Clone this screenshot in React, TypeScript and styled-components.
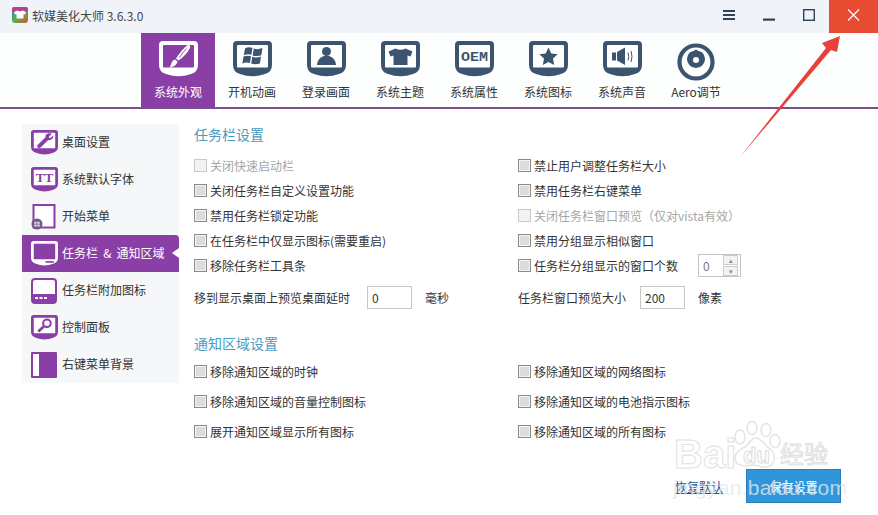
import React from "react";
import styled, { createGlobalStyle } from "styled-components";

const Navy = "#3b5470";
const Purple = "#8a3fa6";

const GlobalStyle = createGlobalStyle`
	html, body {
		margin: 0;
		padding: 0;
		background: #fff;
	}
	body {
		font-family: "Noto Sans CJK SC", "Liberation Sans", sans-serif;
		font-size: 12px;
		color: #333;
	}
`;

/* shared tablet-like frame used by the nav and the sidebar icons */
const Screen = ({ size, color, inner, children }: { size: number; color: string; inner: string; children?: React.ReactNode }) => (
	<svg width={size} height={size * (36 / 39)} viewBox="0 0 39 36">
		<path
			d="M4 0H35a4 4 0 0 1 4 4V24Q39 31 32 33Q19.500 37.500 7 33Q0 31 0 24V4a4 4 0 0 1 4-4Z"
			fill={color}
		/>
		<rect x="4" y="4" width="31" height="22.500" rx="1" fill={inner} />
		{children}
	</svg>
);

const BrushGlyph = ({ fill, slit }: { fill: string; slit: string }) => (
	<g fill={fill}>
		<path d="M29 3.800C31 3.300 31.500 5 31 6.800C29 11.500 24.500 16 19.500 19.500L17 17.500C20.500 12 24.500 7 29 3.800Z" />
		<path d="M16 18.500L18.500 20.500C18 23.500 15 26 10.500 26.500C12.500 24 12 19.800 16 18.500Z" />
		<path d="M27.500 7.500Q24 11 20.500 16.500" fill="none" stroke={slit} strokeWidth="0.900" />
	</g>
);

const WindowsGlyph = () => (
	<g fill={Navy} transform="translate(1 0)">
		<path d="M11 7.500Q14.500 5.500 18.500 7L17.300 13.800Q13.500 12.600 9.800 14.300Z" />
		<path d="M19.800 7.500Q23.500 9 28.500 7L27.300 14.300Q23 15.800 18.600 14.400Z" />
		<path d="M9.500 15.600Q13 14.100 17 15.300L15.900 22Q12 20.800 8.300 22.500Z" />
		<path d="M18.300 15.800Q22.500 17.200 27 15.600L25.800 22.500Q21.500 24 17.200 22.500Z" />
	</g>
);

const PersonGlyph = () => (
	<g fill={Navy}>
		<circle cx="19.500" cy="10.500" r="4.500" />
		<path d="M10 24Q10.500 17 17 15H22Q28.500 17 29 24Z" />
	</g>
);

const ShirtGlyph = () => (
	<path
		fill={Navy}
		d="M14.500 7.500Q19.500 10 24.500 7.500L31.500 10.500L29.500 15.500L26.500 14.500V24H12.500V14.500L9.500 15.500L7.500 10.500Z"
	/>
);

const StarGlyph = () => (
	<path fill={Navy} d="M19.500 6.500L22.300 12.400L28.700 13.200L24 17.600L25.200 24L19.500 20.900L13.800 24L15 17.600L10.300 13.200L16.700 12.400Z" />
);

const SpeakerGlyph = () => (
	<g>
		<path fill={Navy} d="M9 11.500H13V19.500H9Z" />
		<path fill={Navy} d="M14 11L22 6.500V24L14 19.500Z" />
		<path fill="none" stroke={Navy} strokeWidth="1" d="M25 11.500Q26.500 15.500 25 19.500M28 10Q30 15.500 28 21" />
	</g>
);

const OemGlyph = () => (
	<text
		x="19.500"
		y="19.500"
		textAnchor="middle"
		textLength="27"
		lengthAdjust="spacingAndGlyphs"
		fontFamily="Liberation Mono, monospace"
		fontWeight="700"
		fontSize="12"
		fill={Navy}
	>
		OEM
	</text>
);

const AeroIcon = () => (
	<AeroSvg width="38" height="38" viewBox="0 0 38 38">
		<circle cx="19" cy="19" r="16.500" fill="none" stroke={Navy} strokeWidth="4.200" />
		<path fill={Navy} d="M19 6.500Q21 8 25 9.300A9 9 0 1 1 13 9.300Q17 8 19 6.500Z" />
		<circle cx="19" cy="17" r="3" fill="#fff" />
	</AeroSvg>
);

const WrenchGlyph = () => (
	<path
		fill={Purple}
		d="M30 5.500L25.500 10L27.500 12L32 8C32.500 12 29 15.500 25 14.500L13.500 25.500C11 27 7.500 24 9.500 21.500L21 10.500C20 6.500 25 3.500 30 5.500Z"
	/>
);

const TtGlyph = () => (
	<text x="19.500" y="22" textAnchor="middle" fontFamily="Liberation Serif, serif" fontWeight="700" fontSize="19" fill={Purple}>
		TT
	</text>
);

const LensGlyph = () => (
	<g fill="none" stroke={Purple}>
		<circle cx="23" cy="12" r="5.500" strokeWidth="3" />
		<path d="M18.500 16.500L10.500 24" strokeWidth="4" />
	</g>
);

const StartIcon = () => (
	<svg width="26" height="26" viewBox="0 0 26 26">
		<rect x="2.500" y="1" width="21" height="22.500" fill="#fff" stroke={Purple} strokeWidth="2" />
		<circle cx="6" cy="20" r="5.500" fill="#6f5a80" />
		<path d="M3.300 17.700h2.300v2h-2.300zM6.300 17.700h2.400v2H6.300zM3.300 20.400h2.300v2h-2.300zM6.300 20.400h2.400v2H6.300z" fill="#e6dfea" />
	</svg>
);

const TaskbarIcon = () => (
	<Screen size={27} color="#fff" inner={Purple}>
		<rect x="21" y="29" width="12" height="2.400" fill={Purple} />
	</Screen>
);

const TrayIcon = () => (
	<svg width="26" height="26" viewBox="0 0 26 26">
		<rect x="1" y="1" width="24" height="24" rx="3" fill="#fff" stroke={Purple} strokeWidth="2" />
		<rect x="1" y="16" width="24" height="9" rx="2" fill={Purple} />
		<path d="M4 19h3v2H4zM8.500 19h3v2h-3zM13 19h3v2h-3z" fill="#fff" />
	</svg>
);

const MenuIcon = () => (
	<svg width="26" height="26" viewBox="0 0 26 26">
		<rect width="26" height="26" rx="1" fill={Purple} />
		<rect x="2" y="2" width="6" height="22" fill="#fff" />
	</svg>
);

const tabs = [
	{ label: "系统外观", glyph: null },
	{ label: "开机动画", glyph: <WindowsGlyph /> },
	{ label: "登录画面", glyph: <PersonGlyph /> },
	{ label: "系统主题", glyph: <ShirtGlyph /> },
	{ label: "系统属性", glyph: <OemGlyph /> },
	{ label: "系统图标", glyph: <StarGlyph /> },
	{ label: "系统声音", glyph: <SpeakerGlyph /> },
];

const sideItems = [
	{ label: "桌面设置", icon: <Screen size={27} color={Purple} inner="#fff"><WrenchGlyph /></Screen> },
	{ label: "系统默认字体", icon: <Screen size={27} color={Purple} inner="#fff"><TtGlyph /></Screen> },
	{ label: "开始菜单", icon: <StartIcon /> },
	{ label: "任务栏 & 通知区域", icon: <TaskbarIcon />, active: true },
	{ label: "任务栏附加图标", icon: <TrayIcon /> },
	{ label: "控制面板", icon: <Screen size={27} color={Purple} inner="#fff"><LensGlyph /></Screen> },
	{ label: "右键菜单背景", icon: <MenuIcon /> },
];

const Check = ({ label, disabled }: { label: string; disabled?: boolean }) => (
	<CheckRow $disabled={disabled}>
		<CheckBox $disabled={disabled} />
		{label}
	</CheckRow>
);

const App = () => (
	<Page>
		<GlobalStyle />
		<TitleBar>
			<Logo>
				<svg width="16" height="16" viewBox="0 0 16 16">
					<defs>
						<linearGradient id="logoGrad" x1="0" y1="0" x2="1" y2="1">
							<stop offset="0" stopColor="#3f7fc4" />
							<stop offset="0.5" stopColor="#58b04e" />
							<stop offset="1" stopColor="#e0502e" />
						</linearGradient>
					</defs>
					<rect width="16" height="16" rx="3" fill="url(#logoGrad)" />
					<rect x="0" y="0" width="16" height="5" rx="2" fill="#b8408c" />
					<path d="M5 3.500Q8 5 11 3.500L14 5L13 7.500L11.500 7V11.500H4.500V7L3 7.500L2 5Z" fill="#fff" />
				</svg>
			</Logo>
			<AppTitle>软媒美化大师 3.6.3.0</AppTitle>
			<Controls>
				<Control>
					<svg width="12" height="10" viewBox="0 0 12 10">
						<path d="M0 0h12v2H0zM0 4h12v2H0zM0 8h12v2H0z" fill="#2f4358" />
					</svg>
				</Control>
				<Control>
					<svg width="12" height="12" viewBox="0 0 12 12">
						<rect y="9.500" width="12" height="2.200" fill="#2f4358" />
					</svg>
				</Control>
				<Control>
					<svg width="12" height="12" viewBox="0 0 12 12">
						<rect x="0.700" y="0.700" width="10.600" height="10.600" fill="none" stroke="#2f4358" strokeWidth="1.400" />
					</svg>
				</Control>
				<CloseControl>
					<svg width="13" height="12" viewBox="0 0 13 12">
						<path d="M1 0.500L12 11.500M12 0.500L1 11.500" stroke="#fff" strokeWidth="1.200" fill="none" />
					</svg>
				</CloseControl>
			</Controls>
		</TitleBar>

		<Nav>
			{tabs.map((t, i) => (
				<Tab key={t.label} $active={i === 0}>
					{i === 0 ? (
						<Screen size={39} color="#fff" inner={Purple}>
							<BrushGlyph fill="#fff" slit={Purple} />
						</Screen>
					) : (
						<Screen size={39} color={Navy} inner="#fff">
							{t.glyph}
						</Screen>
					)}
					<TabLabel>{t.label}</TabLabel>
				</Tab>
			))}
			<Tab>
				<AeroIcon />
				<TabLabel>Aero调节</TabLabel>
			</Tab>
		</Nav>

		<Main>
			<Sidebar>
				{sideItems.map((s) => (
					<SideItem key={s.label} $active={s.active}>
						<SideIcon>{s.icon}</SideIcon>
						{s.label}
					</SideItem>
				))}
			</Sidebar>

			<Content>
				<Heading>任务栏设置</Heading>
				<OptionGrid $rowHeight={25}>
					<Check label="关闭快速启动栏" disabled />
					<Check label="禁止用户调整任务栏大小" />
					<Check label="关闭任务栏自定义设置功能" />
					<Check label="禁用任务栏右键菜单" />
					<Check label="禁用任务栏锁定功能" />
					<Check label="关闭任务栏窗口预览（仅对vista有效）" disabled />
					<Check label="在任务栏中仅显示图标(需要重启)" />
					<Check label="禁用分组显示相似窗口" />
					<Check label="移除任务栏工具条" />
					<SpinRow>
						<Check label="任务栏分组显示的窗口个数" />
						<Spinner>
							0
							<SpinButtons>
								<SpinButton>▴</SpinButton>
								<SpinButton>▾</SpinButton>
							</SpinButtons>
						</Spinner>
					</SpinRow>
				</OptionGrid>
				<FieldGrid>
					<FieldRow>
						<FieldLabel $width={173}>移到显示桌面上预览桌面延时</FieldLabel>
						<TextBox>0</TextBox>
						<FieldUnit>毫秒</FieldUnit>
					</FieldRow>
					<FieldRow>
						<FieldLabel $width={122}>任务栏窗口预览大小</FieldLabel>
						<TextBox>200</TextBox>
						<FieldUnit>像素</FieldUnit>
					</FieldRow>
				</FieldGrid>

				<SecondHeading>通知区域设置</SecondHeading>
				<OptionGrid $rowHeight={30}>
					<Check label="移除通知区域的时钟" />
					<Check label="移除通知区域的网络图标" />
					<Check label="移除通知区域的音量控制图标" />
					<Check label="移除通知区域的电池指示图标" />
					<Check label="展开通知区域显示所有图标" />
					<Check label="移除通知区域的所有图标" />
				</OptionGrid>
			</Content>
		</Main>

		<Footer>
			<ResetLink>恢复默认</ResetLink>
			<SaveButton>保存设置</SaveButton>
		</Footer>

		<Arrow width="110" height="130" viewBox="0 0 110 130">
			<path d="M2 127L88 18L84 13L102 6L99 22L93 20Z" fill="#e8403a" />
		</Arrow>

		<Watermark>
			<BaiText>Bai</BaiText>
			<PawMark>
				<svg width="54" height="50" viewBox="0 0 54 50">
					<g fill="none" stroke="#e4e4e4" strokeWidth="1.500">
						<ellipse cx="12" cy="16" rx="5" ry="7" />
						<ellipse cx="24" cy="7" rx="5" ry="6.500" />
						<ellipse cx="38" cy="9" rx="5" ry="6.500" />
						<ellipse cx="47" cy="20" rx="5" ry="6.500" />
						<path d="M28 17C35 18 36 24 42 28C49 33 47 46 38 46C32 46 28 44 24 44C18 45 8 46 7 38C6 30 16 28 20 23C22 20 24 17 28 17Z" />
					</g>
				</svg>
				<DuText>du</DuText>
			</PawMark>
			<JingText>经验</JingText>
			<DomainText>jingyan.baidu.com</DomainText>
		</Watermark>
	</Page>
);

const Page = styled.div`
	position: relative;
	width: 878px;
	height: 515px;
	overflow: hidden;
	background: #fff;
`;

const TitleBar = styled.header`
	display: flex;
	align-items: center;
	height: 33px;
	padding-left: 12px;
	box-sizing: border-box;
	background: #f0f4f8;
`;

const Logo = styled.span`
	display: flex;
	margin: 0 4px 3px 0;
`;

const AppTitle = styled.span`
	flex: 1;
	color: #444;
	line-height: 28px;
	margin-bottom: 2px;
`;

const Controls = styled.div`
	display: flex;
	height: 100%;
`;

const Control = styled.button`
	display: flex;
	align-items: center;
	justify-content: center;
	width: 40px;
	height: 100%;
	padding: 0 0 3px;
	border: 0;
	background: none;
`;

const CloseControl = styled(Control)`
	width: 49px;
	background: #e74c32;
`;

const Nav = styled.nav`
	display: flex;
	height: 76px;
	padding-left: 141px;
	box-sizing: border-box;
	border-bottom: 2px solid #7d4f8d;
	background: #fdfefe;
`;

const Tab = styled.div<{ $active?: boolean }>`
	position: relative;
	display: flex;
	flex-direction: column;
	align-items: center;
	width: 74px;
	height: 74px;
	padding-top: 8px;
	box-sizing: border-box;
	background: ${(p) => (p.$active ? Purple : "transparent")};
	color: ${(p) => (p.$active ? "#fff" : "#333")};

	svg {
		flex: none;
	}
`;

const AeroSvg = styled.svg`
	margin-top: 2px;
`;

const TabLabel = styled.span`
	position: absolute;
	top: 50px;
	line-height: 17px;
	white-space: nowrap;
`;

const Main = styled.main`
	display: flex;
	padding: 15px 0 0 22px;
`;

const Sidebar = styled.aside`
	flex: none;
	width: 157px;
	height: 259px;
	background: #f6f7f8;
`;

const SideItem = styled.div<{ $active?: boolean }>`
	position: relative;
	display: flex;
	align-items: center;
	height: 37px;
	padding: 0 0 2px 9px;
	box-sizing: border-box;
	background: ${(p) => (p.$active ? Purple : "transparent")};
	color: ${(p) => (p.$active ? "#fff" : "#333")};
	white-space: nowrap;
	word-spacing: 2.5px;
	border-top-right-radius: ${(p) => (p.$active ? "4px" : "0")};

	${(p) =>
		p.$active &&
		`&::after {
			content: "";
			position: absolute;
			right: 0;
			top: 13px;
			border: 5px solid transparent;
			border-right: 7px solid #fff;
			border-left: 0;
		}`}
`;

const SideIcon = styled.span`
	display: flex;
	flex: none;
	width: 31px;
	margin-top: 2px;
`;

const Content = styled.section`
	flex: 1;
	padding-left: 15px;
`;

const Heading = styled.h2`
	margin: 0 0 9px;
	height: 20px;
	font-size: 14px;
	font-weight: 400;
	line-height: 20px;
	color: #4a9bc0;
`;

const SecondHeading = styled(Heading)`
	margin: 24px 0 3px;
`;

const OptionGrid = styled.div<{ $rowHeight: number }>`
	display: grid;
	grid-template-columns: 324px 1fr;
	grid-auto-rows: ${(p) => p.$rowHeight}px;
	align-items: center;
`;

const CheckRow = styled.label<{ $disabled?: boolean }>`
	display: flex;
	align-items: center;
	white-space: nowrap;
	color: ${(p) => (p.$disabled ? "#a6a6a6" : "#333")};
`;

const CheckBox = styled.span<{ $disabled?: boolean }>`
	flex: none;
	width: 11px;
	height: 11px;
	margin-right: 3px;
	border: 1px solid ${(p) => (p.$disabled ? "#c8c8c8" : "#8a8a8a")};
	background: ${(p) => (p.$disabled ? "#f2f2f2" : "#dcdcdc")};
	box-shadow: inset 0 0 0 1px #f4f4f4;
`;

const SpinRow = styled.div`
	display: flex;
	align-items: center;
`;

const Spinner = styled.div`
	display: flex;
	align-items: center;
	justify-content: space-between;
	width: 43px;
	height: 23px;
	margin-left: 20px;
	padding: 0 2px 0 4px;
	box-sizing: border-box;
	border: 1px solid #c4c4c4;
	color: #777;
`;

const SpinButtons = styled.div`
	display: flex;
	flex-direction: column;
	gap: 1px;
`;

const SpinButton = styled.span`
	display: flex;
	align-items: center;
	justify-content: center;
	width: 13px;
	height: 8px;
	border: 1px solid #ccc;
	background: #f2f2f2;
	font-size: 7px;
	line-height: 8px;
	color: #888;
`;

const FieldGrid = styled.div`
	display: grid;
	grid-template-columns: 324px 1fr;
	margin-top: 8px;
`;

const FieldRow = styled.div`
	display: flex;
	align-items: center;
	height: 23px;
`;

const FieldLabel = styled.span<{ $width: number }>`
	width: ${(p) => p.$width}px;
	white-space: nowrap;
`;

const TextBox = styled.div`
	width: 45px;
	height: 23px;
	padding-left: 4px;
	box-sizing: border-box;
	border: 1px solid #c8c8c8;
	line-height: 21px;
`;

const FieldUnit = styled.span`
	margin-left: 13px;
`;

const Footer = styled.footer`
	position: absolute;
	right: 37px;
	bottom: 12px;
	display: flex;
	align-items: center;
	gap: 23px;
`;

const ResetLink = styled.a`
	color: #1a4f8a;
	text-decoration: underline;
`;

const SaveButton = styled.button`
	width: 95px;
	height: 34px;
	padding: 0;
	border: 1px solid #2a7fb8;
	background: #2f96dc;
	color: #fff;
	font: inherit;
`;

const Arrow = styled.svg`
	position: absolute;
	left: 738px;
	top: 30px;
`;

const Watermark = styled.div`
	position: absolute;
	left: 672px;
	top: 421px;
	width: 170px;
	height: 80px;
	pointer-events: none;
	font-family: "Liberation Sans", sans-serif;
`;

const BaiText = styled.span`
	position: absolute;
	left: 2px;
	top: 10px;
	font-size: 40px;
	line-height: 46px;
	font-weight: 700;
	color: transparent;
	-webkit-text-stroke: 1px #e2e2e2;
`;

const PawMark = styled.span`
	position: absolute;
	left: 56px;
	top: 0;
`;

const DuText = styled.span`
	position: absolute;
	left: 15px;
	top: 24px;
	font-size: 22px;
	line-height: 22px;
	font-weight: 700;
	color: transparent;
	-webkit-text-stroke: 1px #dcdcdc;
`;

const JingText = styled.span`
	position: absolute;
	left: 108px;
	top: 15px;
	font-family: "Noto Sans CJK SC", sans-serif;
	font-size: 24px;
	line-height: 34px;
	color: transparent;
	-webkit-text-stroke: 1px #dedede;
`;

const DomainText = styled.span`
	position: absolute;
	left: 1px;
	top: 55px;
	font-size: 21px;
	line-height: 24px;
	letter-spacing: 0.3px;
	color: rgba(225, 232, 238, 0.8);
	white-space: nowrap;
`;

export default App;
